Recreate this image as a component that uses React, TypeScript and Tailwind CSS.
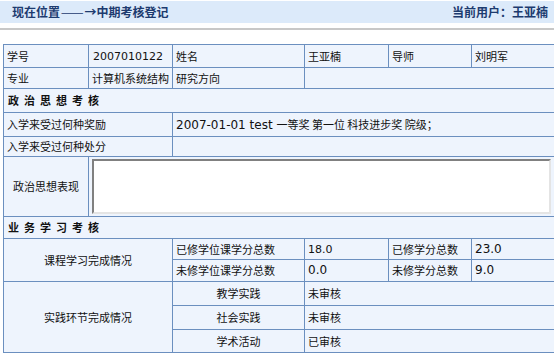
import React from "react";

const F = { fontFamily: '"Noto Sans CJK SC", "Liberation Sans", sans-serif' };
const L = { fontFamily: '"DejaVu Sans", "Noto Sans CJK SC", sans-serif' };

const td =
  "border border-[#6b8fbf] bg-[#eef4fd] px-[3px] py-0 text-[11px] leading-[13px] text-[#111] align-middle whitespace-nowrap overflow-hidden";

export default function App() {
  return (
    <div className="w-[554px] h-[354px] bg-white overflow-hidden" style={F}>
      <div className="h-[22px] mt-[1px] bg-[#dceafa] flex items-center justify-between pl-[12px] pr-[6px] text-[12px] leading-none font-bold text-[#1d3b6f]">
        <span className="flex items-center">
          现在位置
          <span className="tracking-[2px] text-[9px] mx-[1px]">———</span>
          <span className="-ml-[2px]">→</span>中期考核登记
        </span>
        <span>当前用户：王亚楠</span>
      </div>
      <div className="mt-[5px] h-[2px] bg-[#c8c8c8]" />
      <div className="pt-[14px] px-[3px]">
        <table className="w-[551px] border-collapse table-fixed">
          <colgroup>
            <col className="w-[85px]" />
            <col className="w-[84px]" />
            <col className="w-[132px]" />
            <col className="w-[84px]" />
            <col className="w-[83px]" />
            <col className="w-[83px]" />
          </colgroup>
          <tbody>
            <tr className="h-[23px]">
              <td className={td}>学号</td>
              <td className={td + " text-[10px]"} style={L}>
                <span className="pl-[1px]">2007010122</span>
              </td>
              <td className={td}>姓名</td>
              <td className={td}>王亚楠</td>
              <td className={td}>导师</td>
              <td className={td}>刘明军</td>
            </tr>
            <tr className="h-[21px]">
              <td className={td}>专业</td>
              <td className={td}>计算机系统结构</td>
              <td className={td}>研究方向</td>
              <td className={td} colSpan={3}></td>
            </tr>
            <tr className="h-[24px]">
              <td className={td + " font-bold text-[#0a1f9c] tracking-[5px]"} colSpan={6}>
                <span className="pl-[1px]">政治思想考核</span>
              </td>
            </tr>
            <tr className="h-[24px]">
              <td className={td} colSpan={2}>入学来受过何种奖励</td>
              <td className={td} colSpan={4}>
                <span className="text-[12px]" style={L}>2007-01-01 test </span>一等奖 第一位 科技进步奖 院级；
              </td>
            </tr>
            <tr className="h-[20px]">
              <td className={td} colSpan={2}>入学来受过何种处分</td>
              <td className={td} colSpan={4}></td>
            </tr>
            <tr className="h-[60px]">
              <td className={td + " text-center"}>政治思想表现</td>
              <td className={td + " px-[2px] py-0"} colSpan={5}>
                <div className="h-[55px] bg-white border-2 border-t-[#808080] border-l-[#808080] border-r-[#e4e4e4] border-b-[#e4e4e4]" />
              </td>
            </tr>
            <tr className="h-[22px]">
              <td className={td + " font-bold text-[#0a1f9c] tracking-[5px]"} colSpan={6}>
                <span className="pl-[1px]">业务学习考核</span>
              </td>
            </tr>
            <tr className="h-[21px]">
              <td className={td + " text-center"} colSpan={2} rowSpan={2}>课程学习完成情况</td>
              <td className={td}>已修学位课学分总数</td>
              <td className={td + " text-[10px]"} style={L}>18.0</td>
              <td className={td}>已修学分总数</td>
              <td className={td + " text-[12px]"} style={L}>23.0</td>
            </tr>
            <tr className="h-[22px]">
              <td className={td}>未修学位课学分总数</td>
              <td className={td + " text-[12px]"} style={L}>0.0</td>
              <td className={td}>未修学分总数</td>
              <td className={td + " text-[12px]"} style={L}>9.0</td>
            </tr>
            <tr className="h-[24px]">
              <td className={td + " text-center"} colSpan={2} rowSpan={3}>实践环节完成情况</td>
              <td className={td + " text-center"}>教学实践</td>
              <td className={td} colSpan={3}>未审核</td>
            </tr>
            <tr className="h-[24px]">
              <td className={td + " text-center"}>社会实践</td>
              <td className={td} colSpan={3}>未审核</td>
            </tr>
            <tr className="h-[23px]">
              <td className={td + " text-center"}>学术活动</td>
              <td className={td} colSpan={3}>已审核</td>
            </tr>
          </tbody>
        </table>
      </div>
    </div>
  );
}
